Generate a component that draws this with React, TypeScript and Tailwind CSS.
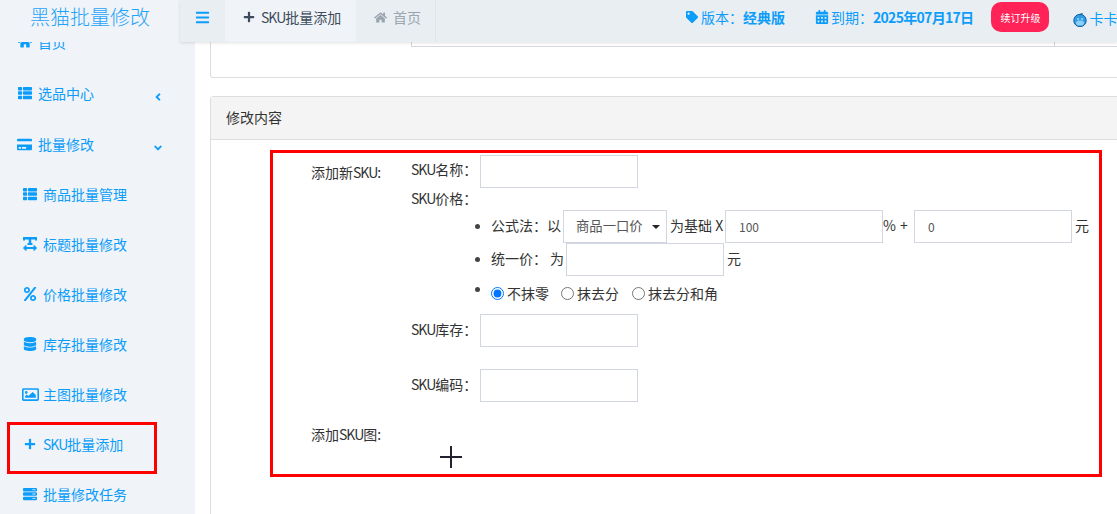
import {
  FaAngleDown,
  FaAngleLeft,
  FaBars,
  FaCalendarAlt,
  FaCreditCard,
  FaDatabase,
  FaHome,
  FaPercent,
  FaPlus,
  FaRegImage,
  FaServer,
  FaTag,
  FaTextWidth,
  FaThList,
} from 'react-icons/fa';

const inputClass =
  'w-[158px] h-[33px] border border-[#d2d6e0] bg-white pl-[13px] pb-[1px] text-[12px] text-[#555] outline-none';

const subItems = [
  { icon: <FaThList />, label: '商品批量管理' },
  { icon: <FaTextWidth className="text-[16px]" />, label: '标题批量修改' },
  { icon: <FaPercent />, label: '价格批量修改' },
  { icon: <FaDatabase />, label: '库存批量修改' },
  { icon: <FaRegImage className="text-[17px] shrink-0" />, label: '主图批量修改' },
];

function Sku() {
  return <span className="tracking-[-1px]">SKU</span>;
}

function Dot({ top }: { top?: boolean }) {
  return <span className={`w-[5px] h-[5px] rounded-full bg-[#444] mr-[11px] shrink-0 ${top ? 'self-start mt-[11px]' : ''}`} />;
}

function Sidebar() {
  return (
    <aside className="w-[195px] shrink-0 h-full overflow-hidden bg-[#f0f3f7] text-[14px] text-[#0c9dfa]">
      <div className="-mt-[24px]">
        <div className="h-[50px] pb-[2px] flex items-center pl-[18px] mb-[1px]">
          <FaHome className="text-[14px] w-[14px]" />
          <span className="ml-[6px]">首页</span>
        </div>
        <div className="h-[50px] pb-[2px] flex items-center pl-[18px] mb-[1px]">
          <FaThList className="text-[14px] w-[14px]" />
          <span className="ml-[6px]">选品中心</span>
          <FaAngleLeft className="ml-[58px] mt-[8px] text-[12px]" />
        </div>
        <div className="h-[50px] pb-[2px] flex items-center pl-[17px]">
          <FaCreditCard className="text-[15px] w-[15px]" />
          <span className="ml-[6px]">批量修改</span>
          <FaAngleDown className="ml-[58px] mt-[8px] text-[12px]" />
        </div>
        {subItems.map((item) => (
          <div key={item.label} className="h-[50px] pb-[2px] flex items-center pl-[23px]">
            <span className="w-[14px] flex justify-center text-[14px]">{item.icon}</span>
            <span className="ml-[6px]">{item.label}</span>
          </div>
        ))}
        <div className="relative h-[50px] pb-[2px] flex items-center pl-[23px]">
          <span className="w-[14px] flex justify-center text-[12px]"><FaPlus /></span>
          <span className="ml-[6px]"><Sku />批量添加</span>
          <div className="absolute left-[7px] top-[2px] w-[150px] h-[52px] border-[3px] border-[#ff0000]" />
        </div>
        <div className="h-[50px] pb-[2px] flex items-center pl-[23px]">
          <span className="w-[14px] flex justify-center text-[14px]"><FaServer /></span>
          <span className="ml-[6px]">批量修改任务</span>
        </div>
      </div>
    </aside>
  );
}

function Header() {
  return (
    <header className="h-[42px] shrink-0 flex relative z-10">
      <div className="w-[180px] shrink-0 bg-[#f0f3f7] pl-[30px] pt-[1px] text-[20px] leading-[32px] font-light text-[#1fa3f8]">
        黑猫批量修改
      </div>
      <div className="flex-1 min-w-0 flex items-center bg-[#e9eef3] shadow-[0_1px_3px_rgba(0,0,0,0.12)] overflow-hidden text-[14px] whitespace-nowrap">
        <div className="w-[45px] shrink-0 h-full pb-[8px] flex items-center justify-center text-[#0c9dfa] text-[15px]">
          <FaBars />
        </div>
        <div className="w-[131px] shrink-0 h-full pb-[8px] bg-[#f0f3f7] flex items-center pl-[18px] text-[#3d4c5c]">
          <FaPlus className="text-[12px]" />
          <span className="ml-[6px]"><Sku />批量添加</span>
        </div>
        <div className="w-[80px] shrink-0 h-full pb-[8px] flex items-center pl-[18px] text-[#9aa5ad] border-r border-[#dfe4e9]">
          <FaHome className="text-[13px]" />
          <span className="ml-[6px]">首页</span>
        </div>
        <div className="flex items-center shrink-0 text-[#0c9dfa] ml-[250px] -mt-[8px]">
          <FaTag className="text-[12px]" />
          <span className="ml-[3px]">版本：</span>
          <b className="font-bold">经典版</b>
          <FaCalendarAlt className="ml-[30px] text-[14px]" />
          <span className="ml-[2px]">到期：</span>
          <b className="font-bold tracking-[-0.7px]">2025年07月17日</b>
          <button className="ml-[18px] w-[58px] h-[30px] rounded-[10px] bg-[#ff2357] text-white text-[10px]">
            续订升级
          </button>
          <svg className="ml-[24px] mt-[6px]" width="14" height="14" viewBox="0 0 14 14">
            <circle cx="7" cy="7.5" r="6.2" fill="#2f9de8" stroke="#0f5f9e" />
            <path d="M7 1.5 C8 0.5 9 0.5 10 1" stroke="#0f5f9e" fill="none" />
            <ellipse cx="7" cy="10" rx="4" ry="2.6" fill="#8fd0f7" />
            <circle cx="5" cy="6" r="0.8" fill="#fff" />
            <circle cx="9" cy="6" r="0.8" fill="#fff" />
          </svg>
          <span className="ml-[2px] mt-[2px]">卡卡</span>
        </div>
      </div>
    </header>
  );
}

function PriceList() {
  return (
    <div className="text-[14px] text-[#333] whitespace-nowrap">
      <div className="h-[33px] flex items-center pl-[64px]">
        <Dot />
        <span className="w-[72px] -mt-[2px]">公式法：以</span>
        <div className="w-[104px] h-[33px] pb-[2px] border border-[#d2d6e0] flex items-center pl-[12px] text-[13.33px] text-[#555]">
          商品一口价
          <span className="ml-[9px] mt-[3px] border-x-[4px] border-t-[4px] border-x-transparent border-t-[#222]" />
        </div>
        <span className="ml-[3px] w-[55px] -mt-[2px]">为基础 X</span>
        <input className={inputClass} defaultValue="100" />
        <span className="w-[17px] -mt-[2px]">%</span>
        <span className="w-[14px] -mt-[2px]">+</span>
        <input className={inputClass} defaultValue="0" />
        <span className="ml-[3px] -mt-[2px]">元</span>
      </div>
      <div className="h-[33px] flex items-center pl-[64px]">
        <Dot />
        <span className="w-[59px] -mt-[2px]">统一价：</span>
        <span className="w-[16px] -mt-[2px]">为</span>
        <input className={inputClass} />
        <span className="ml-[3px] -mt-[2px]">元</span>
      </div>
      <div className="h-[34px] mb-[4px] flex items-center pl-[64px]">
        <Dot top />
        <input type="radio" name="round" defaultChecked className="m-0 w-[13px] h-[13px]" />
        <span className="ml-[3px]">不抹零</span>
        <input type="radio" name="round" className="m-0 ml-[12px] w-[13px] h-[13px]" />
        <span className="ml-[3px]">抹去分</span>
        <input type="radio" name="round" className="m-0 ml-[13px] w-[13px] h-[13px]" />
        <span className="ml-[3px]">抹去分和角</span>
      </div>
    </div>
  );
}

function SkuForm() {
  return (
    <div className="ml-[59px] w-[832px] h-[327px] border-[3px] border-[#ff0000] pl-[38px] pt-[2px] text-[14px] text-[#333]">
      <div className="flex">
        <div className="w-[100px] shrink-0 mt-[7px] leading-[20px]">添加新<Sku />:</div>
        <div className="flex-1 min-w-0">
          <div className="h-[33px] flex items-center">
            <span className="w-[69px] -mt-[5px]"><Sku />名称：</span>
            <input className={inputClass} />
          </div>
          <div className="h-[22px] leading-[20px]"><Sku />价格：</div>
          <PriceList />
          <div className="h-[33px] flex items-center">
            <span className="w-[69px] -mt-[2px]"><Sku />库存：</span>
            <input className={inputClass} />
          </div>
          <div className="h-[33px] mt-[22px] flex items-center">
            <span className="w-[69px] -mt-[2px]"><Sku />编码：</span>
            <input className={inputClass} />
          </div>
        </div>
      </div>
      <div className="mt-[22px] leading-[20px]">添加<Sku />图:</div>
      <svg className="ml-[129px] mt-[2px]" width="22" height="22" viewBox="0 0 22 22">
        <path d="M0 11H22M11 0V22" stroke="#22222f" strokeWidth="2" fill="none" />
      </svg>
    </div>
  );
}

export default function App() {
  return (
    <div
      className="w-[1117px] h-[514px] overflow-hidden flex flex-col bg-white"
      style={{ fontFamily: '"Noto Sans CJK SC", "Noto Sans", sans-serif' }}
    >
      <Header />
      <div className="flex-1 min-h-0 flex">
        <Sidebar />
        <main className="flex-1 min-w-0 overflow-hidden pl-[15px]">
          <div className="w-[960px] h-[36px] border-x border-b border-[#ddd] rounded-b-[3px] pl-[200px]">
            <div className="h-[5px] border-l border-b border-[#d2d6e0] flex">
              <div className="w-[643px] border-r border-[#d2d6e0]" />
            </div>
          </div>
          <div className="mt-[18px] w-[960px] h-[420px] border border-[#ddd] rounded-t-[3px]">
            <div className="h-[43px] pb-[2px] bg-[#f4f4f4] border-b border-[#ddd] flex items-center pl-[15px] text-[14px] text-[#333]">
              修改内容
            </div>
            <div className="pt-[10px]">
              <SkuForm />
            </div>
          </div>
        </main>
      </div>
    </div>
  );
}
